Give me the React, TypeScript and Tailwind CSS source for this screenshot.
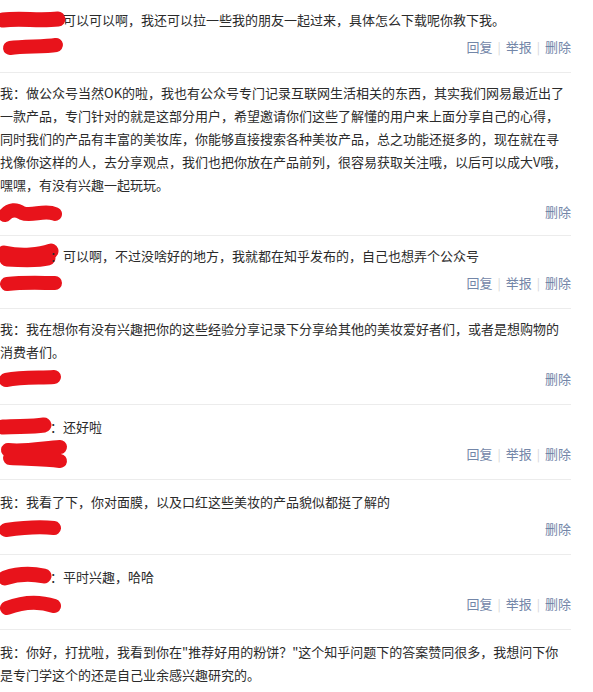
import React from "react";

type Item = {
  name?: string;
  lines: string[];
  foot: string;
  full: boolean;
  pad: string;
};

const RED = "#e8131b";

function Scribble({ d, w = 64, h = 24, sw = 13 }: { d: string; w?: number; h?: number; sw?: number }) {
  return (
    <svg width={w} height={h} viewBox={`0 0 ${w} ${h}`} className="block overflow-visible">
      <path d={d} fill="none" stroke={RED} strokeWidth={sw} strokeLinecap="round" strokeLinejoin="round" />
    </svg>
  );
}

const items: Item[] = [
  {
    name: "M3 12 C 20 10, 40 13, 58 11",
    lines: ["可以可以啊，我还可以拉一些我的朋友一起过来，具体怎么下载呢你教下我。"],
    foot: "M10 13 C 24 11, 44 12, 56 10",
    full: true,
    pad: "pt-2 pb-[12px]",
  },
  {
    lines: [
      "我：做公众号当然OK的啦，我也有公众号专门记录互联网生活相关的东西，其实我们网易最近出了",
      "一款产品，专门针对的就是这部分用户，希望邀请你们这些了解懂的用户来上面分享自己的心得，",
      "同时我们的产品有丰富的美妆库，你能够直接搜索各种美妆产品，总之功能还挺多的，现在就在寻",
      "找像你这样的人，去分享观点，我们也把你放在产品前列，很容易获取关注哦，以后可以成大V哦，",
      "嘿嘿，有没有兴趣一起玩玩。",
    ],
    foot: "M5 15 C 10 9, 16 9, 22 13 C 32 17, 44 9, 55 14",
    full: false,
    pad: "pt-2 pb-[10px]",
  },
  {
    name: "M4 9 C 22 13, 40 11, 51 7 M7 15 C 24 16, 40 16, 48 14",
    lines: ["：可以啊，不过没啥好的地方，我就都在知乎发布的，自己也想弄个公众号"],
    foot: "M7 13 C 24 11, 42 12, 55 12",
    full: true,
    pad: "pt-2 pb-[12px]",
  },
  {
    lines: [
      "我：我在想你有没有兴趣把你的这些经验分享记录下分享给其他的美妆爱好者们，或者是想购物的",
      "消费者们。",
    ],
    foot: "M6 13 C 22 10, 40 11, 54 10",
    full: false,
    pad: "pt-2 pb-[12px]",
  },
  {
    name: "M3 12 C 18 11, 32 12, 44 10",
    lines: ["：还好啦"],
    foot: "M8 8 C 24 10, 44 6, 60 5 M10 16 C 30 17, 46 17, 60 19",
    full: true,
    pad: "pt-[10px] pb-[12px]",
  },
  {
    lines: ["我：我看了下，你对面膜，以及口红这些美妆的产品貌似都挺了解的"],
    foot: "M6 13 C 20 11, 36 9, 54 11",
    full: false,
    pad: "pt-[10px] pb-[12px]",
  },
  {
    name: "M5 13 C 20 8, 34 9, 44 11",
    lines: ["：平时兴趣，哈哈"],
    foot: "M7 16 C 20 11, 36 8, 54 14",
    full: true,
    pad: "pt-[10px] pb-[12px]",
  },
  {
    lines: [
      "我：你好，打扰啦，我看到你在\"推荐好用的粉饼？\"这个知乎问题下的答案赞同很多，我想问下你",
      "是专门学这个的还是自己业余感兴趣研究的。",
    ],
    foot: "",
    full: false,
    pad: "pt-[10px]",
  },
];

function Bar() {
  return <span className="mx-[5px] text-[#d6d6d6] text-[12px]">|</span>;
}

export default function App() {
  return (
    <div
      className="w-[593px] h-[692px] overflow-hidden bg-white text-[13px] text-[#2b2b2b]"
      style={{ fontFamily: '"Noto Sans CJK SC", "Noto Sans", sans-serif' }}
    >
      <div className="w-[571px]">
        {items.map((it, i) => {
          const last = i === items.length - 1;
          const colon = it.lines[0].startsWith("：");
          return (
            <div key={i} className={`${it.pad} ${last ? "" : "border-b border-[#ececec]"}`}>
              {it.lines.map((line, j) => (
                <div key={j} className="h-[23px] leading-[23px] whitespace-nowrap flex items-center">
                  {j === 0 && it.name && (
                    <span className={`shrink-0 ${colon ? "w-[50px]" : "w-[63px]"} h-[23px]`}>
                      <Scribble d={it.name} w={colon ? 50 : 63} h={23} sw={15} />
                    </span>
                  )}
                  <span>{line}</span>
                </div>
              ))}
              {it.foot && (
                <div className="mt-[3px] h-[26px] flex items-center justify-between">
                  <Scribble d={it.foot} w={64} h={24} sw={14} />
                  <div className="flex items-center text-[13px] text-[#7386a8]">
                    {it.full && (
                      <>
                        <span>回复</span>
                        <Bar />
                        <span>举报</span>
                        <Bar />
                      </>
                    )}
                    <span>删除</span>
                  </div>
                </div>
              )}
            </div>
          );
        })}
      </div>
    </div>
  );
}
